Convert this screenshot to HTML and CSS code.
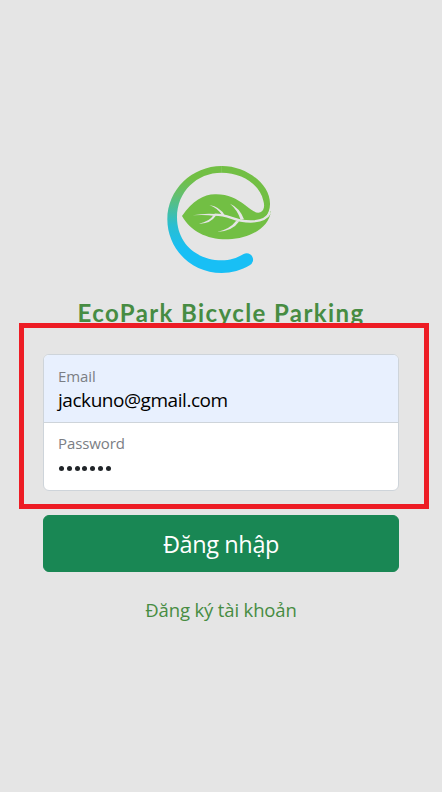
FILE: index.html
```html
<!DOCTYPE html>
<html lang="vi">
<head>
<meta charset="utf-8">
<title>EcoPark Bicycle Parking</title>
<link rel="stylesheet" href="styles.css">
</head>
<body>
<main class="login">
  <svg class="logo" viewBox="0 0 390 390" aria-hidden="true">
    <defs>
      <linearGradient id="ring" x1="0" y1="70" x2="0" y2="285" gradientUnits="userSpaceOnUse">
        <stop offset="0" stop-color="#72bf44"/>
        <stop offset=".22" stop-color="#65bf6c"/>
        <stop offset=".65" stop-color="#2abed0"/>
        <stop offset="1" stop-color="#18bff5"/>
      </linearGradient>
    </defs>
    <path fill="url(#ring)" d="M200 33C111 33 37 104 37 193C37 283 110 354 200 354C230 354 260 346 284 331A19 19 0 0 0 266 297C244 310 224 316 200 316C126 316 66 266 66 187C66 110 125 53 200 53Z"/>
    <path fill="#72bf44" d="M199 33C275 32 347 89 345 148C345 163 340 176 333 184Q343 179 348 167C343 218 285 251 220 253C158 255 107 229 81 183C112 139 146 118 180 118C218 117 243 130 271 151C292 168 304 176 316 172C327 168 330 153 325 137C315 89 262 53 199 53Z"/>
    <g class="veins">
      <path class="vein-main" d="M346 172C336 192 310 205 257 197C225 189 212 179 179 179"/>
      <path d="M113 181Q150 174 181 177L180 183Q150 178 113 181Z"/>
      <path d="M163 150Q195 155 210 182L202 182Q190 160 163 150Z"/>
      <path d="M225 146Q255 159 267 193L257 195Q248 165 225 146Z"/>
      <path d="M132 206Q163 200 176 180L184 181Q165 208 132 206Z"/>
      <path d="M187 231Q225 222 243 198L253 199Q232 229 187 231Z"/>
    </g>
  </svg>
  <h1 class="title">EcoPark Bicycle Parking</h1>
  <form class="form">
    <div class="fields">
      <div class="field filled">
        <span class="label">Email</span>
        <span class="value">jackuno@gmail.com</span>
      </div>
      <div class="field">
        <span class="label">Password</span>
        <span class="dots"><i></i><i></i><i></i><i></i><i></i><i></i><i></i></span>
      </div>
    </div>
    <button class="submit" type="button">Đăng nhập</button>
  </form>
  <a class="register">Đăng ký tài khoản</a>
  <div class="highlight"></div>
</main>
</body>
</html>
```
FILE: styles.css
```css
* { box-sizing: border-box; }
body {
  margin: 0;
  background: #e5e5e5;
  font-family: "Open Sans", "Noto Sans", sans-serif;
}
.login {
  position: relative;
  display: flex;
  flex-direction: column;
  align-items: center;
  height: 792px;
  padding-top: 155px;
  overflow: hidden;
}
.logo { display: block; flex: none; width: 130px; height: 130px; margin-right: 2px; }
.veins { fill: #e5e5e5; }
.vein-main { fill: none; stroke: #e5e5e5; stroke-width: 7; }
.title {
  margin: 13px 0 0;
  height: 29px;
  color: #478c42;
  font: 700 24px/30px Lato, sans-serif;
  letter-spacing: 1.4px;
  white-space: nowrap;
}
.form { width: 356px; margin: 27px 0 0; }
.fields {
  height: 137px;
  border: 1px solid #ced4da;
  border-radius: 6px;
  background: #fff;
  overflow: hidden;
}
.field { display: flex; flex-direction: column; align-items: flex-start; height: 67px; padding: 9px 14px 0; }
.filled { height: 68px; padding-top: 10px; background: #e8f0fe; border-bottom: 1px solid #ced4da; }
.label { color: #7b7e84; font-size: 15px; line-height: 22px; letter-spacing: -.1px; }
.value { margin-top: 1px; color: #000; font-size: 19px; line-height: 25px; letter-spacing: -.45px; white-space: nowrap; }
.dots { display: flex; gap: 2.8px; margin: 12px 0 0 1px; }
.dots i { width: 5px; height: 5px; border-radius: 50%; background: #212529; }
.submit {
  display: block;
  width: 100%;
  height: 57px;
  margin-top: 24px;
  padding: 1px 0 0;
  border: 1px solid #198754;
  border-radius: 6px;
  background: #198754;
  color: #fff;
  font: 400 23.5px/54px "Open Sans", sans-serif;
  letter-spacing: -.4px;
}
.register { margin-top: 24px; color: #478c42; font-size: 18.5px; line-height: 28px; letter-spacing: -.15px; white-space: nowrap; }
.highlight {
  position: absolute;
  top: 323px;
  left: 19px;
  width: 410px;
  height: 186px;
  border: 5px solid #ed1c24;
}
```
